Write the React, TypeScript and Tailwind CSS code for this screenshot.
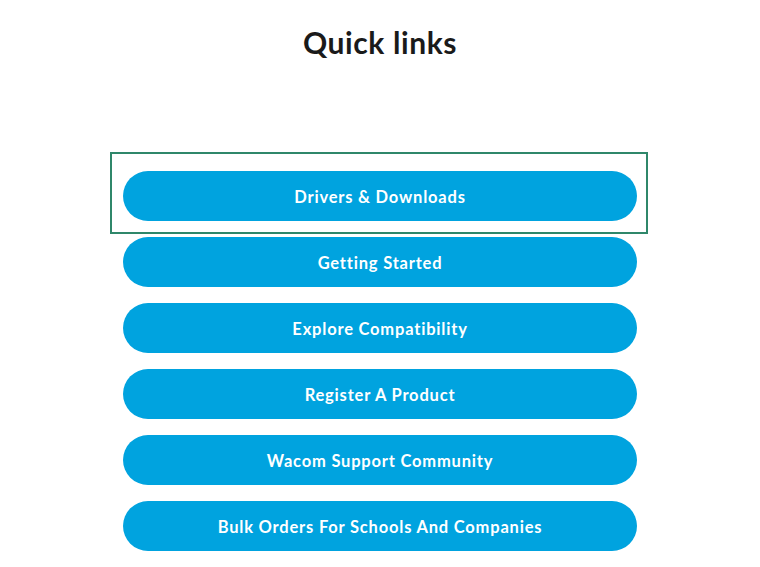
import React from 'react';

const links = [
    'Drivers & Downloads',
    'Getting Started',
    'Explore Compatibility',
    'Register A Product',
    'Wacom Support Community',
    'Bulk Orders For Schools And Companies',
];

const App: React.FC = () => {
    return (
        <div className="min-h-screen bg-white font-['Lato','Noto_Sans',sans-serif]">
            <h2 className="pt-[22px] text-center text-[30px] font-bold leading-[40px] tracking-[0.6px] text-[#1a1a1a]">
                Quick links
            </h2>

            <ul className="mx-auto mt-[109px] flex w-[514px] flex-col gap-4">
                {links.map((label, i) => (
                    <li key={label} className="relative">
                        {/* focus ring on the first link */}
                        {i === 0 && (
                            <span className="pointer-events-none absolute -top-[19px] -bottom-[13px] -left-[13px] -right-[11px] border-2 border-[#2f876a]" />
                        )}
                        <a
                            href="#"
                            className="flex h-[50px] items-center justify-center rounded-full bg-[#00a3df] pt-[2px] text-[16.5px] font-bold tracking-[0.8px] text-white"
                        >
                            {label}
                        </a>
                    </li>
                ))}
            </ul>
        </div>
    );
};

export default App;
